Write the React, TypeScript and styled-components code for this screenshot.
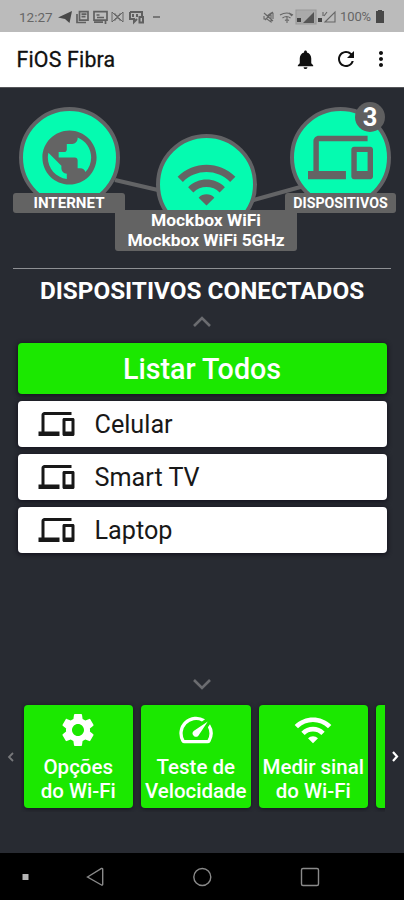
import React from "react";
import styled, { createGlobalStyle } from "styled-components";
import {
  MdDevices,
  MdMoreVert,
  MdNotifications,
  MdPublic,
  MdRefresh,
  MdSettings,
  MdSpeed,
  MdWifi,
} from "react-icons/md";

const GlobalStyle = createGlobalStyle`
  * { box-sizing: border-box; }
  body { margin: 0; background: #282a31; }
`;

const Screen = styled.div`
  width: 404px;
  height: 900px;
  display: flex;
  flex-direction: column;
  overflow: hidden;
  background: #282b32;
  font-family: Roboto, "Liberation Sans", sans-serif;
`;

const StatusBar = styled.div`
  height: 32px;
  flex: none;
  display: flex;
  align-items: center;
  justify-content: space-between;
  padding: 1px 20px 0 19px;
  background: #bbbbbb;
  color: #666;
  svg { display: block; }
`;

const StatusGroup = styled.div<{ $gap: number }>`
  display: flex;
  align-items: center;
  gap: ${(p) => p.$gap}px;
`;

const Clock = styled.span`
  width: 35px;
  font-size: 13.5px;
  white-space: nowrap;
`;

const Percent = styled.span`
  width: 33px;
  font-size: 13px;
  letter-spacing: -0.1px;
  white-space: nowrap;
`;

const AppBar = styled.header`
  height: 56px;
  flex: none;
  display: flex;
  align-items: center;
  padding: 0 11px 1px 16.5px;
  background: #fff;
  border-bottom: 1px solid #55565a;
  color: #101010;
`;

const AppTitle = styled.h1`
  flex: 1;
  margin: 0;
  font-size: 21.3px;
  font-weight: 400;
  letter-spacing: 0.2px;
  -webkit-text-stroke: 0.3px #101010;
`;

const AppAction = styled.span<{ $size: number; $gap: number }>`
  display: flex;
  margin-left: ${(p) => p.$gap}px;
  font-size: ${(p) => p.$size}px;
`;

const Topology = styled.section`
  position: relative;
  height: 180px;
  flex: none;
`;

const Links = styled.svg`
  position: absolute;
  inset: 0;
`;

const Node = styled.div<{ $x: number; $y: number; $icon: number }>`
  position: absolute;
  left: ${(p) => p.$x}px;
  top: ${(p) => p.$y}px;
  width: 101px;
  height: 101px;
  display: flex;
  align-items: center;
  justify-content: center;
  border: 4px solid #626366;
  border-radius: 50%;
  background: #05fbb0;
  color: #646464;
  font-size: ${(p) => p.$icon}px;
`;

const NodeLabel = styled.div<{ $x: number; $y: number; $w: number; $h: number; $size: number }>`
  position: absolute;
  left: ${(p) => p.$x}px;
  top: ${(p) => p.$y}px;
  width: ${(p) => p.$w}px;
  height: ${(p) => p.$h}px;
  border-radius: 3px;
  background: #636363;
  color: #fff;
  font-size: ${(p) => p.$size}px;
  font-weight: 700;
  line-height: 20px;
  text-align: center;
  white-space: nowrap;
`;

const Badge = styled.div`
  position: absolute;
  left: 355px;
  top: 14px;
  width: 30px;
  height: 30px;
  border-radius: 50%;
  background: #5f5f60;
  color: #fff;
  font-size: 25.5px;
  font-weight: 700;
  line-height: 30px;
  text-align: center;
`;

const Devices = styled.section`
  height: 422px;
  flex: none;
  display: flex;
  flex-direction: column;
  align-items: center;
`;

const Divider = styled.div`
  width: 378px;
  height: 1px;
  flex: none;
  background: #8e9094;
`;

const Heading = styled.h2`
  height: 44px;
  margin: 0;
  font-size: 24.3px;
  font-weight: 700;
  line-height: 43px;
  color: #fff;
  white-space: nowrap;
`;

const Chevron = styled.svg<{ $color: string }>`
  display: block;
  flex: none;
  fill: none;
  stroke: ${(p) => p.$color};
`;

const HeadingChevron = styled(Chevron)`
  margin: 3px 0 15px;
`;

const DeviceList = styled.div`
  width: 369px;
  display: flex;
  flex-direction: column;
  gap: 7px;
  flex: 1;
`;

const ListAll = styled.button`
  height: 51px;
  border: 0;
  padding: 0;
  border-radius: 4px;
  background: #1be800;
  box-shadow: 0 1px 4px 1px #15151f;
  color: #fff;
  font-family: inherit;
  font-size: 28.7px;
  font-weight: 500;
  line-height: 50px;
`;

const DeviceRow = styled.div`
  height: 46px;
  display: flex;
  align-items: center;
  gap: 20px;
  padding-left: 20px;
  border-radius: 4px;
  background: #fff;
  box-shadow: 0 1px 4px 1px #15151f;
  color: #181818;
  font-size: 25.2px;
  line-height: 46px;
`;

const DeviceName = styled.span`
  padding-top: 1px;
`;

const DeviceIcon = styled(MdDevices)`
  width: 37px;
  height: 36px;
`;

const Carousel = styled.nav`
  height: 107px;
  margin-top: 13px;
  flex: none;
  display: flex;
  align-items: center;
`;

const Arrow = styled.span<{ $side: "left" | "right" }>`
  width: ${(p) => (p.$side === "left" ? 21 : 19)}px;
  display: flex;
  flex: none;
  justify-content: center;
`;

const Track = styled.div`
  width: 364px;
  height: 111px;
  display: flex;
  gap: 8px;
  padding: 4px 0 4px 2.5px;
  overflow: hidden;
`;

const Card = styled.button`
  width: 109.5px;
  height: 103px;
  flex: none;
  display: flex;
  flex-direction: column;
  align-items: center;
  padding: 5px 0 0;
  border: 0;
  border-radius: 4px;
  background: #1be800;
  box-shadow: 0 1px 4px #15151f;
  color: #fff;
  font-family: inherit;
  font-size: 20.5px;
  font-weight: 500;
  line-height: 24px;
  white-space: nowrap;
  svg { flex: none; margin-bottom: 5px; }
`;

const NavBar = styled.footer`
  height: 47px;
  margin-top: auto;
  flex: none;
  background: #000;
  svg { display: block; }
`;

const chevronPaths = {
  up: "M2 10 L10 2 L18 10",
  down: "M2 2 L10 10 L18 2",
};

const devices = ["Celular", "Smart TV", "Laptop"];

const shortcuts = [
  { icon: MdSettings, size: 40, lines: ["Opções", "do Wi-Fi"] },
  { icon: MdSpeed, size: 40, lines: ["Teste de", "Velocidade"] },
  { icon: MdWifi, size: 40, lines: ["Medir sinal", "do Wi-Fi"] },
];

function NotificationIcons() {
  return (
    <svg width="110" height="16" viewBox="0 0 110 16" fill="none" stroke="#606060" strokeWidth="1.4">
      <path d="M0 8.5 L14 2 L11.5 14 L7 10 Z" fill="#484848" stroke="none" />
      <path d="M19 5v8.5h9M21.5 2.7h8.5v8.5h-8.5zM23.5 5.2h5M23.5 7.7h4" strokeWidth="1.7" />
      <path d="M36 2.7h13v8.5H36zM36 13.2h9M38.5 6h3M39 8.5h7M47.5 12v3" strokeWidth="1.7" />
      <path d="M54 3v10l4-4h3l4 4V3l-4 4h-3zM56.5 4l6 8M62.5 4l-6 8" strokeWidth="0.9" />
      <path d="M72 3h12v4M72 3v7h4v3l3-3M75 5v3M79 5v3M81.5 8h3.500v5.500h-3.500z" strokeWidth="2" />
      <path d="M95 8h7" strokeWidth="1.5" />
    </svg>
  );
}

function SignalIcons() {
  return (
    <svg width="74" height="16" viewBox="0 0 74 16" fill="none" stroke="#666" strokeWidth="1.1">
      <path d="M1 4l9 8M2 11l8-8M1 7v3h3l4 3V4L4 7M10 4v6" />
      <path d="M17 6q7-4 13 0M19.500 9q4-3 8 0M22 11.5q2-1.5 4 0M24 8v6M26 4l3 3" />
      <path d="M33 1h20v14H33z" fill="#aaa" stroke="#999" />
      <path d="M40 14L51 3v11z" fill="#555" stroke="none" />
      <path d="M34 9h4v4h-4zM55 9h4v4h-4z" fill="#444" stroke="none" />
      <path d="M62 13L72 3v10zM60 3v4M64 3l-3 4" />
    </svg>
  );
}

export default function App() {
  return (
    <>
      <GlobalStyle />
      <Screen>
        <StatusBar>
          <StatusGroup $gap={4}>
            <Clock>12:27</Clock>
            <NotificationIcons />
          </StatusGroup>
          <StatusGroup $gap={3}>
            <SignalIcons />
            <Percent>100%</Percent>
            <svg width="8" height="13" viewBox="0 0 8 13" fill="#484848">
              <path d="M2 0h4v1h2v12H0V1h2z" />
            </svg>
          </StatusGroup>
        </StatusBar>

        <AppBar>
          <AppTitle>FiOS Fibra</AppTitle>
          <AppAction $size={23} $gap={0}><MdNotifications /></AppAction>
          <AppAction $size={24} $gap={17}><MdRefresh /></AppAction>
          <AppAction $size={24} $gap={11}><MdMoreVert /></AppAction>
        </AppBar>

        <Topology>
          <Links width="404" height="180" stroke="#636466" strokeWidth="4">
            <path d="M115 92 L158 102 M250 113 L304 98" />
          </Links>
          <Node $x={18.5} $y={18.5} $icon={65}><MdPublic /></Node>
          <Node $x={155.5} $y={45.5} $icon={63}><MdWifi /></Node>
          <Node $x={289.5} $y={18.5} $icon={65}><MdDevices /></Node>
          <NodeLabel $x={13} $y={105} $w={112} $h={20} $size={15.1}>INTERNET</NodeLabel>
          <NodeLabel $x={285} $y={105} $w={111} $h={20} $size={14.2}>DISPOSITIVOS</NodeLabel>
          <NodeLabel $x={115} $y={122} $w={182} $h={41} $size={17.4}>
            Mockbox WiFi<br />Mockbox WiFi 5GHz
          </NodeLabel>
          <Badge>3</Badge>
        </Topology>

        <Devices>
          <Divider />
          <Heading>DISPOSITIVOS CONECTADOS</Heading>
          <HeadingChevron width="20" height="12" $color="#6b6c70" strokeWidth="2.6">
            <path d={chevronPaths.up} />
          </HeadingChevron>
          <DeviceList>
            <ListAll>Listar Todos</ListAll>
            {devices.map((name) => (
              <DeviceRow key={name}>
                <DeviceIcon />
                <DeviceName>{name}</DeviceName>
              </DeviceRow>
            ))}
          </DeviceList>
          <Chevron width="20" height="12" $color="#6b6c70" strokeWidth="2.6">
            <path d={chevronPaths.down} />
          </Chevron>
        </Devices>

        <Carousel>
          <Arrow $side="left">
            <Chevron width="7" height="10" $color="#77787b" strokeWidth="1.8"><path d="M6 1L2 5l4 4" /></Chevron>
          </Arrow>
          <Track>
            {shortcuts.map(({ icon: Icon, size, lines }) => (
              <Card key={lines[0]}>
                <Icon size={size} />
                {lines.map((line) => <span key={line}>{line}</span>)}
              </Card>
            ))}
            <Card aria-label="Mais" />
          </Track>
          <Arrow $side="right">
            <Chevron width="8" height="11" $color="#fff" strokeWidth="2.2"><path d="M2 1l4 4.5L2 10" /></Chevron>
          </Arrow>
        </Carousel>

        <NavBar>
          <svg width="404" height="47" fill="none" stroke="#8a8a8a" strokeWidth="1.4">
            <path d="M22.5 21h6v6h-6z" fill="#b5b5b5" stroke="none" />
            <path d="M87.5 24L101.5 15.5Q102.7 15 102.7 16.5V31Q102.7 32.6 101.5 32Z" />
            <circle cx="202.3" cy="24" r="8.5" />
            <rect x="301.5" y="15.5" width="17" height="17" rx="1.5" />
          </svg>
        </NavBar>
      </Screen>
    </>
  );
}
